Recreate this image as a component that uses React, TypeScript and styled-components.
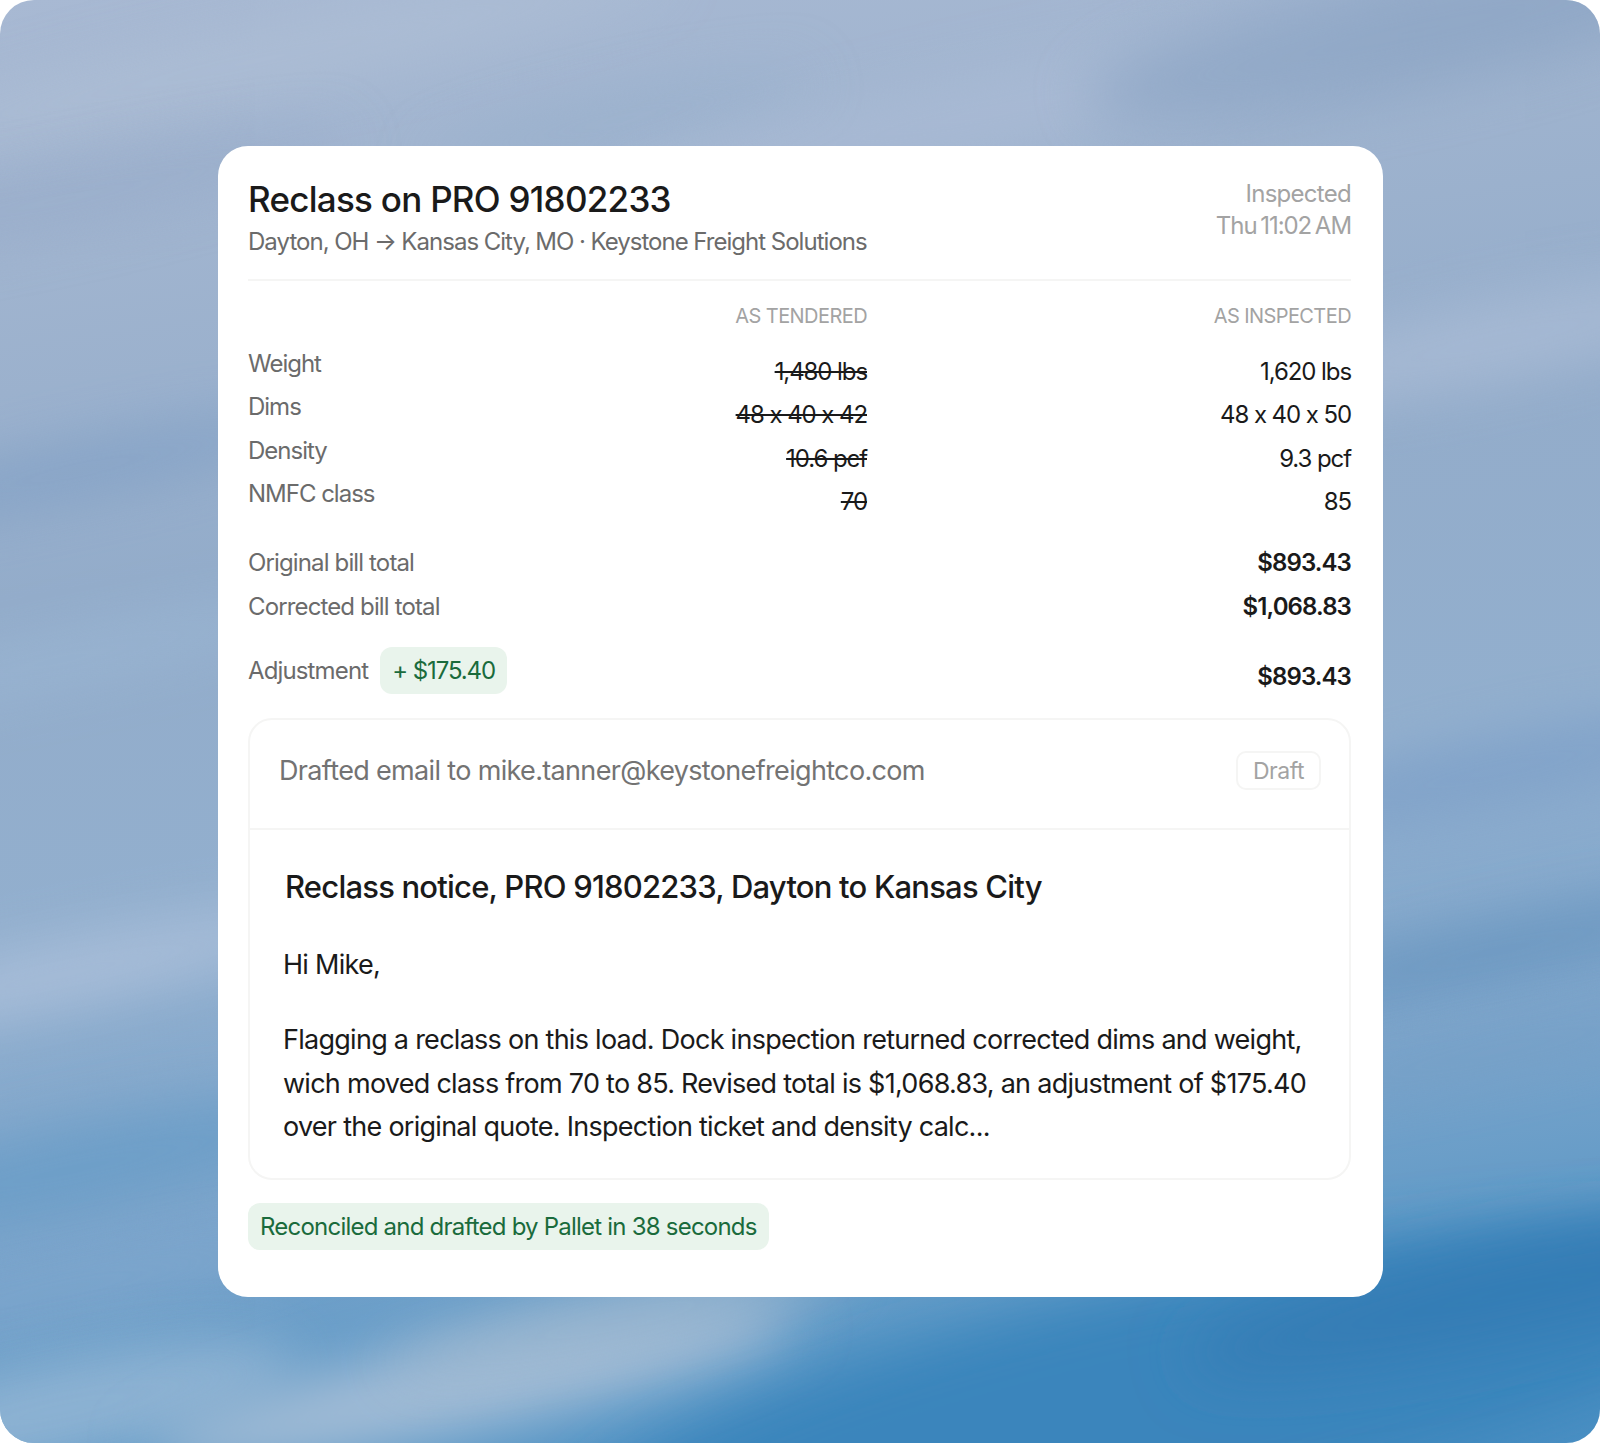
import React from "react";
import styled, { createGlobalStyle } from "styled-components";

const GlobalStyle = createGlobalStyle`
  html, body {
    margin: 0;
    padding: 0;
    background: #fff;
  }
  * {
    box-sizing: border-box;
  }
`;

const Page = styled.div`
  position: relative;
  width: 1600px;
  height: 1443px;
  overflow: hidden;
  border-radius: 34px;
  padding: 146px 217px 0 218px;
  font-family: Inter, "Liberation Sans", sans-serif;
  background: linear-gradient(172deg, #a8b9d3 0%, #a0b4cf 16%, #93acca 36%, #92afce 56%, #7da5cb 74%, #5b98c6 88%, #4a8fc3 100%);
`;

const Backdrop = styled.svg`
  position: absolute;
  inset: 0;
`;

const Card = styled.main`
  position: relative;
  height: 1151px;
  background: #fff;
  border-radius: 30px;
  padding: 31px 32px 0 30px;
`;

const Header = styled.header`
  display: flex;
  justify-content: space-between;
  height: 104px;
  border-bottom: 2px solid #f5f5f4;
`;

const Title = styled.h1`
  margin: 0;
  font-size: 35px;
  line-height: 44px;
  font-weight: 500;
  letter-spacing: -0.021em;
  color: #1a1a1a;
`;

const Route = styled.p`
  margin: 0;
  padding-top: 1px;
  font-size: 24px;
  line-height: 40px;
  letter-spacing: -0.04em;
  word-spacing: -0.3px;
  color: #6b6b6b;
`;

const Stamp = styled.div`
  padding-top: 1px;
  font-size: 24px;
  line-height: 32px;
  letter-spacing: -0.03em;
  color: #a3a3a3;
  text-align: right;
`;

const StampTime = styled.div`
  letter-spacing: -0.044em;
  word-spacing: -2px;
`;

const Table = styled.div`
  display: grid;
  grid-template-columns: 181px 438px 484px;
  margin-top: 20px;
`;

const ColHead = styled.div`
  grid-column: ${(p) => p.$col};
  height: 30px;
  font-size: 20px;
  line-height: 30px;
  letter-spacing: -0.029em;
  color: #a3a3a3;
  text-align: right;
`;

const Label = styled.div`
  height: 43.4px;
  font-size: 24px;
  line-height: 30px;
  letter-spacing: -0.042em;
  color: #6b6b6b;
`;

const Value = styled.div`
  height: 43.4px;
  padding-top: 8px;
  font-size: 24px;
  line-height: 30px;
  letter-spacing: -0.045em;
  color: #1a1a1a;
  text-align: right;
  text-decoration: ${(p) => (p.$struck ? "line-through" : "none")};
`;

const Rows = styled(Table)`
  margin-top: 18px;
`;

const Totals = styled.div`
  display: grid;
  grid-template-columns: 1fr auto;
  row-gap: 14.4px;
  margin-top: 25px;
`;

const TotalLabel = styled.div`
  font-size: 24px;
  line-height: 30px;
  letter-spacing: -0.036em;
  color: #6b6b6b;
`;

const TotalValue = styled.div`
  font-size: 24px;
  line-height: 30px;
  font-weight: 600;
  letter-spacing: -0.037em;
  color: #1a1a1a;
  text-align: right;
`;

const AdjustmentRow = styled.div`
  display: flex;
  justify-content: space-between;
  align-items: flex-end;
  margin-top: 25px;
`;

const AdjustmentLabel = styled.div`
  display: flex;
  align-items: center;
  gap: 12px;
  font-size: 24px;
  letter-spacing: -0.036em;
  color: #6b6b6b;
`;

const Pill = styled.span`
  display: inline-flex;
  align-items: center;
  height: 47px;
  padding: 0 12px;
  border-radius: 12px;
  background: #e9f4ec;
  color: #1a6b3c;
  font-size: 24px;
  letter-spacing: ${(p) => (p.$tight ? "-0.045em" : "-0.0325em")};
`;

const AdjustmentValue = styled(TotalValue)`
  margin-bottom: 2px;
`;

const EmailCard = styled.section`
  height: 462px;
  margin-top: 24px;
  border: 2px solid #f5f5f4;
  border-radius: 24px;
`;

const EmailHeader = styled.div`
  display: flex;
  justify-content: space-between;
  align-items: center;
  height: 110px;
  padding: 0 28px 6px 29px;
  border-bottom: 2px solid #f5f5f4;
`;

const Recipient = styled.div`
  font-size: 27px;
  letter-spacing: -0.0245em;
  color: #737373;
`;

const DraftTag = styled.span`
  display: inline-flex;
  align-items: center;
  height: 39px;
  padding: 0 15px;
  border: 2px solid #f5f5f4;
  border-radius: 10px;
  font-size: 23px;
  color: #a3a3a3;
  letter-spacing: -0.02em;
`;

const EmailBody = styled.div`
  padding: 36px 32px 0 33px;
`;

const Subject = styled.h2`
  margin: 0 0 35px 2px;
  font-size: 31px;
  line-height: 42px;
  font-weight: 500;
  letter-spacing: -0.0255em;
  color: #1a1a1a;
`;

const BodyText = styled.p`
  margin: 0 0 32px;
  font-size: 27px;
  line-height: 43.4px;
  letter-spacing: -0.027em;
  color: #1a1a1a;
`;

const FooterPill = styled(Pill)`
  margin-top: 23px;
`;

const rows = [
  { label: "Weight", before: "1,480 lbs", after: "1,620 lbs" },
  { label: "Dims", before: "48 x 40 x 42", after: "48 x 40 x 50" },
  { label: "Density", before: "10.6 pcf", after: "9.3 pcf" },
  { label: "NMFC class", before: "70", after: "85" },
];

const streaks = [
  { cx: 260, cy: 60, rx: 420, ry: 34, fill: "#afbfd6", op: 0.7 },
  { cx: 620, cy: 120, rx: 200, ry: 22, fill: "#94aecb", op: 0.6 },
  { cx: 1000, cy: 110, rx: 400, ry: 40, fill: "#abbcd6", op: 0.7 },
  { cx: 1420, cy: 30, rx: 340, ry: 60, fill: "#88a2c2", op: 0.65 },
  { cx: 60, cy: 200, rx: 300, ry: 26, fill: "#94a9c8", op: 0.6 },
  { cx: 80, cy: 470, rx: 240, ry: 24, fill: "#7f9fc5", op: 0.8 },
  { cx: 60, cy: 660, rx: 280, ry: 20, fill: "#9db9d6", op: 0.7 },
  { cx: 60, cy: 975, rx: 280, ry: 30, fill: "#acc0da", op: 0.95 },
  { cx: 70, cy: 1170, rx: 300, ry: 42, fill: "#6c9ec8", op: 0.95 },
  { cx: 60, cy: 1290, rx: 260, ry: 22, fill: "#82a8cf", op: 0.8 },
  { cx: 1500, cy: 340, rx: 260, ry: 40, fill: "#a9bbd5", op: 0.85 },
  { cx: 1500, cy: 770, rx: 240, ry: 30, fill: "#7b9fc8", op: 0.8 },
  { cx: 1500, cy: 950, rx: 260, ry: 24, fill: "#6593bd", op: 0.9 },
  { cx: 1500, cy: 1050, rx: 260, ry: 20, fill: "#759fc6", op: 0.8 },
  { cx: 1180, cy: 1400, rx: 620, ry: 120, fill: "#3a85bc", op: 1 },
  { cx: 1520, cy: 1290, rx: 340, ry: 50, fill: "#347db5", op: 1 },
  { cx: 60, cy: 1410, rx: 240, ry: 50, fill: "#93b5d4", op: 0.9 },
  { cx: 470, cy: 1385, rx: 330, ry: 46, fill: "#a2bcd6", op: 1 },
  { cx: 620, cy: 1320, rx: 240, ry: 22, fill: "#9fb8cf", op: 0.9 },
];

export default function App() {
  return (
    <>
      <GlobalStyle />
      <Page>
        <Backdrop width="1600" height="1443" viewBox="0 0 1600 1443">
          <defs>
            <filter id="soft" x="-50%" y="-300%" width="200%" height="700%">
              <feGaussianBlur stdDeviation="28" />
            </filter>
          </defs>
          {streaks.map((s) => (
            <ellipse
              key={`${s.cx}-${s.cy}`}
              cx={s.cx}
              cy={s.cy}
              rx={s.rx}
              ry={s.ry}
              fill={s.fill}
              opacity={s.op}
              filter="url(#soft)"
              transform={`rotate(-12 ${s.cx} ${s.cy})`}
            />
          ))}
        </Backdrop>
        <Card>
          <Header>
            <div>
              <Title>Reclass on PRO 91802233</Title>
              <Route>Dayton, OH → Kansas City, MO · Keystone Freight Solutions</Route>
            </div>
            <Stamp>
              Inspected
              <StampTime>Thu 11:02 AM</StampTime>
            </Stamp>
          </Header>
          <Table>
            <ColHead $col={2}>AS TENDERED</ColHead>
            <ColHead $col={3}>AS INSPECTED</ColHead>
          </Table>
          <Rows>
            {rows.map((r) => (
              <React.Fragment key={r.label}>
                <Label>{r.label}</Label>
                <Value $struck>{r.before}</Value>
                <Value>{r.after}</Value>
              </React.Fragment>
            ))}
          </Rows>
          <Totals>
            <TotalLabel>Original bill total</TotalLabel>
            <TotalValue>$893.43</TotalValue>
            <TotalLabel>Corrected bill total</TotalLabel>
            <TotalValue>$1,068.83</TotalValue>
          </Totals>
          <AdjustmentRow>
            <AdjustmentLabel>
              Adjustment
              <Pill $tight>+ $175.40</Pill>
            </AdjustmentLabel>
            <AdjustmentValue>$893.43</AdjustmentValue>
          </AdjustmentRow>
          <EmailCard>
            <EmailHeader>
              <Recipient>Drafted email to mike.tanner@keystonefreightco.com</Recipient>
              <DraftTag>Draft</DraftTag>
            </EmailHeader>
            <EmailBody>
              <Subject>Reclass notice, PRO 91802233, Dayton to Kansas City</Subject>
              <BodyText>Hi Mike,</BodyText>
              <BodyText>
                Flagging a reclass on this load. Dock inspection returned corrected dims and weight,
                wich moved class from 70 to 85. Revised total is $1,068.83, an adjustment of $175.40
                over the original quote. Inspection ticket and density calc...
              </BodyText>
            </EmailBody>
          </EmailCard>
          <FooterPill>Reconciled and drafted by Pallet in 38 seconds</FooterPill>
        </Card>
      </Page>
    </>
  );
}
